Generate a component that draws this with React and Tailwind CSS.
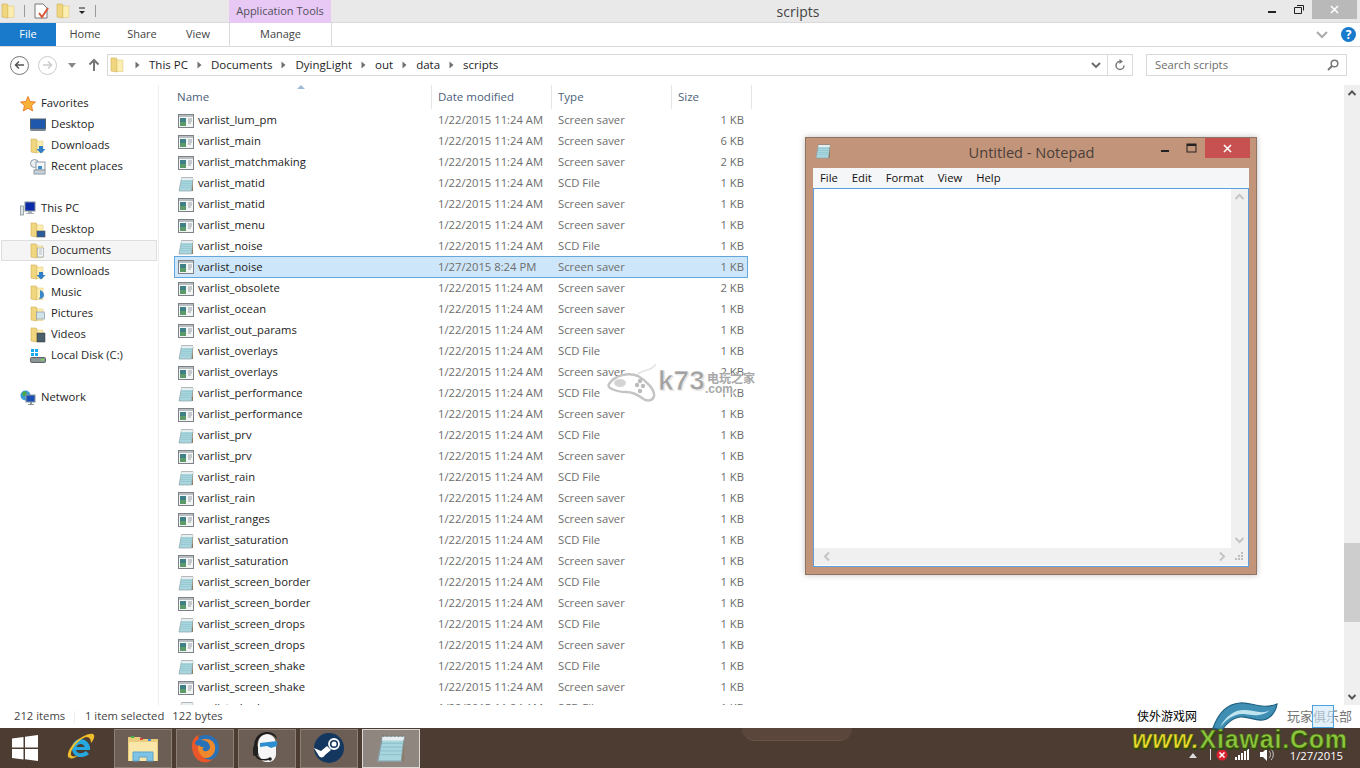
const FONT = '"Open Sans", "Noto Sans CJK SC", sans-serif';

const ROWS = [
  ['varlist_lum_pm', 'ss', 1], ['varlist_main', 'ss', 6], ['varlist_matchmaking', 'ss', 2],
  ['varlist_matid', 'scd', 1], ['varlist_matid', 'ss', 1], ['varlist_menu', 'ss', 1],
  ['varlist_noise', 'scd', 1], ['varlist_noise', 'ss', 1, true], ['varlist_obsolete', 'ss', 2],
  ['varlist_ocean', 'ss', 1], ['varlist_out_params', 'ss', 1], ['varlist_overlays', 'scd', 1],
  ['varlist_overlays', 'ss', 2], ['varlist_performance', 'scd', 1], ['varlist_performance', 'ss', 1],
  ['varlist_prv', 'scd', 1], ['varlist_prv', 'ss', 1], ['varlist_rain', 'scd', 1],
  ['varlist_rain', 'ss', 1], ['varlist_ranges', 'ss', 1], ['varlist_saturation', 'scd', 1],
  ['varlist_saturation', 'ss', 1], ['varlist_screen_border', 'scd', 1], ['varlist_screen_border', 'ss', 1],
  ['varlist_screen_drops', 'scd', 1], ['varlist_screen_drops', 'ss', 1], ['varlist_screen_shake', 'scd', 1],
  ['varlist_screen_shake', 'ss', 1], ['varlist_shader', 'scd', 1],
];

const SaverIcon = () => (
  <svg width="16" height="14" viewBox="0 0 16 14" className="shrink-0">
    <rect x="0.5" y="0.5" width="15" height="13" fill="#f4f5f5" stroke="#7c8287" />
    <rect x="1" y="1" width="14" height="2" fill="#b9bec2" />
    <rect x="2" y="4" width="6" height="8" fill="#3f7f86" />
    <rect x="2" y="8" width="6" height="4" fill="#5c9a6a" />
    <path d="M10 5h4M10 7h4M10 9h3" stroke="#9aa0a5" />
  </svg>
);

const NotepadIcon = ({ size = 16 }) => (
  <svg width={size} height={size} viewBox="0 0 16 16" className="shrink-0">
    <path d="M3.500 2h11.500l-1.500 13H1z" fill="#a9d6de" stroke="#8aa0a8" strokeWidth="0.7" />
    <path d="M3.500 2h11.500l-.3 2H3.200z" fill="#e6eef0" />
    <path d="M3.200 5.500h10.900M2.900 7.500h10.900M2.700 9.500h10.900M2.400 11.500h10.900" stroke="#8fc4cf" strokeWidth="0.7" />
    <path d="M13.700 15l1.300-12v12z" fill="#8b7b60" />
    <path d="M4 2v-1M6 2v-1M8 2v-1M10 2v-1M12 2v-1M14 2v-1" stroke="#777" strokeWidth="0.7" />
  </svg>
);

const Folder = ({ overlay }) => (
  <svg width="16" height="16" viewBox="0 0 16 16" className="shrink-0">
    <path d="M1 1h5l1 1v13l-6-1z" fill="#f0d67e" stroke="#cfae55" strokeWidth="0.6" />
    <path d="M7 3h6v11.500H7z" fill="#fbeeb0" stroke="#dcc376" strokeWidth="0.5" />
    {overlay === 'down' && <path d="M9 8h4v3h2.500L11 15.500 6.500 11H9z" fill="#2f7fc8" />}
    {overlay === 'desktop' && <rect x="7" y="9" width="8" height="6" fill="#2b5c9c" stroke="#555" strokeWidth="0.6" />}
    {overlay === 'docs' && <path d="M7.500 5h6v9h-6zM9 7h3M9 9h3M9 11h3" fill="#f4f4f4" stroke="#8c9aa6" strokeWidth="0.6" />}
    {overlay === 'music' && <path d="M10 5c3 1 4 3 4 5 0 3-3 4-5 4l1-2z" fill="#3b88c9" />}
    {overlay === 'pics' && <rect x="6.500" y="6" width="8" height="7" fill="#cfe3e8" stroke="#8c9aa6" strokeWidth="0.7" />}
    {overlay === 'video' && <path d="M7 6h8v9H7z" fill="#49606c" stroke="#333" strokeWidth="0.5" />}
  </svg>
);

const Star = () => (
  <svg width="16" height="16" viewBox="0 0 16 16" className="shrink-0">
    <path d="M8 .5l2.200 5 5.300.5-4 3.600 1.200 5.400L8 12.200 3.300 15l1.200-5.400-4-3.600 5.300-.5z" fill="#f9b233" stroke="#e8792b" strokeWidth="0.9" />
  </svg>
);

const Monitor = () => (
  <svg width="16" height="16" viewBox="0 0 16 16" className="shrink-0">
    <rect x="0.5" y="2" width="15" height="10" fill="#1f57ad" stroke="#54606a" />
    <rect x="0.5" y="12" width="15" height="2" fill="#7b8791" />
  </svg>
);

const Recent = () => (
  <svg width="16" height="16" viewBox="0 0 16 16" className="shrink-0">
    <circle cx="4.500" cy="4.500" r="4" fill="#e9eef1" stroke="#8e9aa3" />
    <rect x="6" y="3" width="9" height="8" fill="#f6f7f8" stroke="#8e9aa3" />
    <rect x="4" y="11" width="11" height="4" fill="#c9d2d8" stroke="#8e9aa3" />
    <rect x="8" y="7" width="4" height="3" fill="#3a8bc9" />
  </svg>
);

const ThisPC = () => (
  <svg width="16" height="16" viewBox="0 0 16 16" className="shrink-0">
    <rect x="0.5" y="5" width="3" height="9" fill="#dde3e6" stroke="#7c878e" strokeWidth="0.7" />
    <rect x="5" y="1" width="10" height="9" fill="#0c2ba8" stroke="#86929a" />
    <path d="M8 10h4v2h2v1H6v-1h2z" fill="#a8b2b8" />
  </svg>
);

const Disk = () => (
  <svg width="16" height="16" viewBox="0 0 16 16" className="shrink-0">
    <path d="M1 1h3v3H1zM5 1h3v3H5zM1 5h3v3H1zM5 5h3v3H5z" fill="#14a9f2" />
    <rect x="0.5" y="9.500" width="15" height="5" rx="1" fill="#8d9498" stroke="#5e6468" />
    <rect x="11" y="11" width="3" height="1.500" fill="#6fe04f" />
  </svg>
);

const Globe = () => (
  <svg width="16" height="16" viewBox="0 0 16 16" className="shrink-0">
    <circle cx="5.500" cy="5.500" r="5" fill="#3a9bd8" />
    <path d="M2 3l3-2 2 2-2 3H3zM6 7l3 1-1 2H6z" fill="#4aa845" />
    <rect x="6" y="5" width="9" height="7" fill="#1c4fb3" stroke="#8a959c" />
    <path d="M10 12h2v2h2v1H8v-1h2z" fill="#8a959c" />
  </svg>
);

const NavRow = ({ icon, label, child, active }) => (
  <div className={`h-[21px] flex items-center gap-[5px] text-[11.25px] text-[#1e1e1e] border ${child ? 'pl-[28px]' : 'pl-[18px]'} ${active ? 'bg-[#f5f5f5] border-[#dedede]' : 'border-transparent'}`}>
    {icon}
    <span>{label}</span>
  </div>
);

const Sidebar = () => (
  <div className="w-[159px] shrink-0 border-r border-[#eeeeee] pt-[8px] pl-px pr-px flex flex-col gap-[21px]">
    <div>
      <NavRow icon={<Star />} label="Favorites" />
      <NavRow child icon={<Monitor />} label="Desktop" />
      <NavRow child icon={<Folder overlay="down" />} label="Downloads" />
      <NavRow child icon={<Recent />} label="Recent places" />
    </div>
    <div>
      <NavRow icon={<ThisPC />} label="This PC" />
      <NavRow child icon={<Folder overlay="desktop" />} label="Desktop" />
      <NavRow child active icon={<Folder overlay="docs" />} label="Documents" />
      <NavRow child icon={<Folder overlay="down" />} label="Downloads" />
      <NavRow child icon={<Folder overlay="music" />} label="Music" />
      <NavRow child icon={<Folder overlay="pics" />} label="Pictures" />
      <NavRow child icon={<Folder overlay="video" />} label="Videos" />
      <NavRow child icon={<Disk />} label="Local Disk (C:)" />
    </div>
    <div>
      <NavRow icon={<Globe />} label="Network" />
    </div>
  </div>
);

const HeaderCell = ({ label, width }) => (
  <div className={`${width} h-[24px] pl-[6px] flex items-center border-r border-[#e5e5e5] text-[11.5px] text-[#4c607a]`}>{label}</div>
);

const FileRow = ({ name, kind, size, selected }) => (
  <div className={`w-[574px] flex items-center text-[11.25px] border ${selected ? 'h-[22px] -mt-px bg-[#cde6f9] border-[#64a7dc]' : 'h-[21px] border-transparent'}`}>
    <div className="w-[263px] pl-[3px] flex items-center gap-[4px] text-[#1c1c1c]">
      {kind === 'ss' ? <SaverIcon /> : <NotepadIcon />}
      <span>{name}</span>
    </div>
    <div className="w-[120px] text-[#6d6d6d]">{selected ? '1/27/2015 8:24 PM' : '1/22/2015 11:24 AM'}</div>
    <div className="w-[130px] text-[#6d6d6d]">{kind === 'ss' ? 'Screen saver' : 'SCD File'}</div>
    <div className="w-[56px] text-right text-[#6d6d6d]">{size} KB</div>
  </div>
);

const Scrollbar = () => (
  <div className="w-[16px] shrink-0 bg-[#efefef] flex flex-col items-center">
    <svg width="16" height="17" viewBox="0 0 16 17"><path d="M4.500 10l3.500-3.500 3.500 3.500" fill="none" stroke="#555" strokeWidth="2" /></svg>
    <div className="h-[441px]" />
    <div className="w-full h-[79px] bg-[#cdcdcd]" />
    <div className="flex-1" />
    <svg width="16" height="17" viewBox="0 0 16 17"><path d="M4.500 7l3.500 3.500 3.500-3.500" fill="none" stroke="#555" strokeWidth="2" /></svg>
  </div>
);

const Crumb = ({ label }) => (
  <>
    <svg width="5" height="8" viewBox="0 0 5 8" className="shrink-0"><path d="M0.5 0.500l4 3.500-4 3.500z" fill="#707070" /></svg>
    <span>{label}</span>
  </>
);

const Notepad = () => (
  <div className="absolute left-[805px] top-[137px] w-[452px] h-[438px] bg-[#c29479] border border-[#8f7464] shadow-[0_0_6px_rgba(0,0,0,0.25)] flex flex-col px-[7px] pb-[7px]">
    <div className="h-[30px] shrink-0 relative flex items-center justify-center text-[14.6px] text-[#4a3f3a]">
      <div className="absolute left-[2px] top-[5px]"><NotepadIcon /></div>
      <span className="ml-[1px] -mt-[1px]">Untitled - Notepad</span>
      <svg className="absolute left-[348px] top-[11px]" width="10" height="4" viewBox="0 0 10 4"><rect y="1" width="8" height="2" fill="#222" /></svg>
      <svg className="absolute left-[373px] top-[5px]" width="12" height="10" viewBox="0 0 12 10"><rect x="1" y="1" width="9" height="8" fill="none" stroke="#222" /><rect x="1" y="1" width="9" height="2" fill="#222" /></svg>
      <div className="absolute left-[392px] top-0 w-[45px] h-[20px] bg-[#c75050] flex items-center justify-center">
        <svg width="9" height="9" viewBox="0 0 9 9"><path d="M1 1l7 7M8 1l-7 7" stroke="#fff" strokeWidth="1.600" /></svg>
      </div>
    </div>
    <div className="h-[20px] shrink-0 bg-[#f5f6f7] flex items-center gap-[14px] pl-[7px] text-[11.25px] text-[#111]">
      <span>File</span><span>Edit</span><span>Format</span><span>View</span><span>Help</span>
    </div>
    <div className="flex-1 min-h-0 bg-white border border-[#5a9fe2] flex flex-col">
      <div className="flex-1 flex justify-end">
        <div className="w-[17px] bg-[#f0f0f0] flex flex-col justify-between">
          <svg width="17" height="17" viewBox="0 0 17 17"><path d="M4.500 10l4-4 4 4" fill="none" stroke="#c4c4c4" strokeWidth="2" /></svg>
          <svg width="17" height="17" viewBox="0 0 17 17"><path d="M4.500 7l4 4 4-4" fill="none" stroke="#c4c4c4" strokeWidth="2" /></svg>
        </div>
      </div>
      <div className="h-[17px] bg-[#f0f0f0] flex items-center justify-between pl-[5px] pr-[4px] mb-px">
        <svg width="17" height="17" viewBox="0 0 17 17"><path d="M10 4.500l-4 4 4 4" fill="none" stroke="#c4c4c4" strokeWidth="2" /></svg>
        <div className="flex items-center gap-[5px]">
          <svg width="17" height="17" viewBox="0 0 17 17"><path d="M7 4.500l4 4-4 4" fill="none" stroke="#c4c4c4" strokeWidth="2" /></svg>
          <svg width="9" height="9" viewBox="0 0 9 9"><path d="M6 0h2v2H6zM3 3h2v2H3zM6 3h2v2H6zM0 6h2v2H0zM3 6h2v2H3zM6 6h2v2H6z" fill="#bdbdbd" /></svg>
        </div>
      </div>
    </div>
  </div>
);

const TaskBtn = ({ active, children }) => (
  <div className={`w-[58px] h-[39px] flex items-center justify-center border ${active ? 'bg-[#8f867f] border-[#dcd8d5]' : 'bg-[#6c5e54] border-[#8c7f76]'}`}>{children}</div>
);

const Taskbar = () => (
  <div className="h-[40px] shrink-0 bg-[#4c3c32] flex items-center pl-[4px] relative">
    {/* wallpaper showing through the glass */}
    <div className="absolute left-[742px] top-0 w-[110px] h-[13px] bg-[#5a463a] rounded-b-[40px] border-b border-[#6a5346]" />
    <div className="w-[42px] flex justify-center">
      <svg width="27" height="26" viewBox="0 0 27 26"><path d="M0 3.500L11.500 2v10.500H0zM13 1.800L26 0v12.500H13zM0 14h11.500v10.500L0 23zM13 14h13v12l-13-1.800z" fill="#fff" /></svg>
    </div>
    <div className="w-[68px] flex justify-center relative">
      <svg width="32" height="32" viewBox="0 0 32 32">
        <path d="M16 7a10 10 0 0 1 10 11H12c.4 3 5 5 10 1l3 3c-7 6-17 3-17-6 0-5 4-9 8-9zm-3.500 8h8c-.5-4-7-4-8 0z" fill="#25a8e0" />
        <path d="M5 26C1 22 9 9 20 4c5-2.500 9-3 10-1 1 2-1 6-3 8 0-3-1-6-5-6C13 8 4 21 8 24c2 1 5 0 7-1-4 3-8 5-10 2z" fill="#f0bd2d" />
      </svg>
    </div>
    <div className="flex gap-[4px] relative">
      <TaskBtn>
        <svg width="32" height="30" viewBox="0 0 32 30">
          <path d="M1 4h12l2 2h16v22H1z" fill="#e9cc7c" />
          <path d="M2 9h28v19H2z" fill="#f8e7a8" />
          <rect x="4" y="3" width="3" height="2" fill="#3fb24a" /><rect x="13" y="5" width="3" height="2" fill="#d8483c" /><rect x="21" y="6" width="3" height="2" fill="#3a8fd8" />
          <path d="M6 28v-9h20v9h-6v-4h-8v4z" fill="#7fc4e6" stroke="#5fa3c9" />
        </svg>
      </TaskBtn>
      <TaskBtn>
        <svg width="32" height="32" viewBox="0 0 32 32">
          <circle cx="17" cy="16" r="13" fill="#2a72b8" />
          <path d="M17 7c5 0 8 3 9 7 1 6-3 12-9 12-5 0-9-3-9-9 0-2 1-3 2-4 1 2 3 2 5 2-2 1-2 3 0 4 3 1 6-1 6-4 0-4-4-7-9-7 1-1 3-1 5-1z" fill="#f0892c" />
          <path d="M3 16C2 9 6 4 10 3c-1 1-1 3 0 4-3 1-4 3-4 5l3 2c-1 4 2 10 8 13 3 1 5 1 7 0-3 3-7 4-11 3C7 28 4 23 3 16z" fill="#e8562a" />
        </svg>
      </TaskBtn>
      <TaskBtn>
        <svg width="32" height="34" viewBox="0 0 32 34">
          <path d="M7 14C7 7 11 3 16 3s9 4 9 11v9c0 4-3 8-7 8h-3c-4 0-7-5-8-10z" fill="#f6f6f6" />
          <path d="M3 16C3 6 9 1 16 1c5 0 9 2 10 7-3-4-6-5-10-5C10 3 6 8 6 16z" fill="#1d1d1d" />
          <rect x="2" y="15" width="5" height="10" rx="2" fill="#222" />
          <path d="M9 12l17-2v5l-6 2-4-2-7 1z" fill="#2d8fd0" />
          <path d="M5 25c2 3 7 5 13 3" fill="none" stroke="#1d1d1d" strokeWidth="1.500" />
          <circle cx="19" cy="28" r="1.800" fill="#1d1d1d" />
        </svg>
      </TaskBtn>
      <TaskBtn>
        <svg width="30" height="30" viewBox="0 0 30 30">
          <circle cx="15" cy="15" r="15" fill="#14375f" />
          <circle cx="20" cy="11" r="5" fill="none" stroke="#fff" strokeWidth="1.800" />
          <circle cx="20" cy="11" r="2.500" fill="#fff" />
          <path d="M0 15l7 3 6-5 4 4-6 5c-1 3-5 3-6 1z" fill="#fff" />
        </svg>
      </TaskBtn>
      <TaskBtn active><NotepadIcon size={30} /></TaskBtn>
    </div>
    <div className="flex-1" />
    <div className="flex flex-col items-end pr-[17px] text-white text-[11.25px] pt-[17px]">
      <span>1/27/2015</span>
    </div>
    <div className="absolute left-[1189px] top-[20px] flex items-center">
      <svg width="8" height="6" viewBox="0 0 8 6"><path d="M0 6l4-5 4 5z" fill="#ddd" /></svg>
      <div className="w-px h-[11px] bg-[#ddd] ml-[13px]" />
      <svg width="12" height="12" viewBox="0 0 12 12" className="ml-[5px]"><circle cx="6" cy="6" r="5.500" fill="#d9232e" /><path d="M3.500 3.500l5 5M8.500 3.500l-5 5" stroke="#fff" strokeWidth="1.500" /></svg>
      <svg width="16" height="11" viewBox="0 0 16 11" className="ml-[7px]"><path d="M0 8h2v3H0zM3 6h2v5H3zM6 4h2v7H6zM9 2h2v9H9zM12 0h2v11h-2z" fill="#fff" /></svg>
      <svg width="15" height="13" viewBox="0 0 15 13" className="ml-[9px]"><path d="M0 4h3l4-4v13l-4-4H0z" fill="#fff" /><path d="M9 3c2 2 2 5 0 7M11 1c3 3 3 8 0 11" fill="none" stroke="#ccc" /></svg>
    </div>
  </div>
);

const Watermarks = () => (
  <>
    <div className="absolute left-[607px] top-[363px] flex items-start pointer-events-none">
      <svg width="50" height="40" viewBox="0 0 50 40">
        <path d="M49 1C44 9 36 6 31 11" fill="none" stroke="#e4e4e4" strokeWidth="1.500" />
        <path d="M2 21C8 12 22 9 31 13c9 5 17 14 16 20-1 5-7 6-12 2-4-3-10-6-16-6-5 0-10-1-14-3-3-1-4-3-3-5z" fill="#fff" stroke="#c4c4c4" strokeWidth="2.500" />
        <ellipse cx="13" cy="20" rx="6" ry="4" fill="#d4d4d4" />
        <circle cx="30" cy="22" r="2.200" fill="#bbb" /><circle cx="36" cy="23" r="2.200" fill="#bbb" /><circle cx="33" cy="18" r="2.200" fill="#bbb" /><circle cx="33" cy="28" r="2.200" fill="#bbb" />
      </svg>
      <div className="relative w-[100px] h-[40px] ml-px">
        <span className="absolute left-0 top-[2px] text-[28px] leading-[32px] font-bold text-[#a2a2a2] [-webkit-text-stroke:0.5px_#fff] [text-shadow:1px_1px_1px_#ddd]" style={{ fontFamily: '"Liberation Sans", sans-serif' }}>k73</span>
        <span className="absolute left-[49px] top-[8px] text-[12px] leading-[14px] font-bold text-[#a8a8a8] [text-shadow:1px_1px_0_#fff]" style={{ fontFamily: '"Noto Sans CJK SC", sans-serif' }}>电玩之家</span>
        <span className="absolute left-[47px] top-[19px] text-[12px] leading-[14px] font-bold text-[#a8a8a8] [text-shadow:1px_1px_0_#fff]" style={{ fontFamily: '"Liberation Sans", sans-serif' }}>.com</span>
      </div>
    </div>

    <span className="absolute left-[1137px] top-[707px] text-[12px] leading-[18px] text-black" style={{ fontFamily: '"Noto Sans CJK SC", sans-serif' }}>侠外游戏网</span>
    <span className="absolute left-[1287px] top-[707px] text-[13px] leading-[18px] text-[#777]" style={{ fontFamily: '"Noto Sans CJK SC", sans-serif' }}>玩家俱乐部</span>
    <div className="absolute left-[1312px] top-[705px] w-[22px] h-[23px] bg-[#cfe8f8]/60 border border-[#49a4df]" />
    <svg className="absolute left-[1210px] top-[702px]" width="70" height="30" viewBox="0 0 70 30">
      <path d="M3 26C8 12 16 2 30 1c12-1 22 7 37 1-1 8-7 15-14 16-9 1-15-4-23-3-8 1-14 7-18 13z" fill="#3f8fb5" stroke="#1d5f80" strokeWidth="1.200" />
      <path d="M10 25c6-11 14-17 24-17 10 0 18 5 26 0-6 6-16 6-26 4-10-1-18 6-24 13z" fill="#bfe3ef" />
    </svg>
    <div className="absolute left-[1132px] top-[728px] text-[25px] leading-[22px] font-bold tracking-[0.8px] [-webkit-text-stroke:0.6px_#3d5a0c] [text-shadow:1px_2px_0_#2e4a08] whitespace-nowrap" style={{ fontFamily: '"Liberation Sans", sans-serif' }}>
      <span className="italic text-[#ecd92e]">www.</span><span className="text-[#8cc63e]">Xiawai.Com</span>
    </div>
  </>
);

export default function App() {
  return (
    <div className="relative w-[1360px] h-[768px] overflow-hidden bg-white flex flex-col" style={{ fontFamily: FONT }}>
      {/* title bar */}
      <div className="h-[23px] shrink-0 bg-[#e9e9e9] border-b border-[#dadada] flex relative">
        <div className="flex items-center w-[229px] pl-px gap-[7px]">
          <Folder />
          <div className="w-px h-[12px] bg-[#999]" />
          <svg width="16" height="16" viewBox="0 0 16 16" className="ml-[2px] shrink-0"><path d="M1 1h8l4 4v10H1z" fill="#fff" stroke="#777" /><path d="M5 10l3 4 6-9" fill="none" stroke="#d9593a" strokeWidth="2" /></svg>
          <div className="-ml-px"><Folder /></div>
          <svg width="8" height="8" viewBox="0 0 8 8" className="-ml-px"><path d="M1 1h6" stroke="#222" /><path d="M1 4h6L4 7z" fill="#222" /></svg>
          <div className="w-px h-[12px] bg-[#999] ml-[2px]" />
        </div>
        <div className="w-[102px] h-[23px] bg-[#e8c9f6] flex items-center justify-center text-[11px] text-[#50505a]">Application Tools</div>
        <div className="absolute left-0 right-0 top-px text-center text-[14px] text-[#444] pl-[236px] pointer-events-none">scripts</div>
        <div className="flex-1" />
        <div className="flex items-start">
          <svg width="10" height="19" viewBox="0 0 10 19"><rect x="0" y="11" width="8" height="2" fill="#222" /></svg>
          <svg width="14" height="19" viewBox="0 0 14 19" className="ml-[15px]"><path d="M1.500 7.500h7v6h-7zM4 5.500h6.500v5" fill="none" stroke="#222" /></svg>
          <div className="ml-[5px] w-[45px] h-[19px] bg-[#b9b9b9] flex items-center justify-center">
            <svg width="9" height="9" viewBox="0 0 9 9"><path d="M1 1l7 7M8 1l-7 7" stroke="#fff" strokeWidth="1.600" /></svg>
          </div>
          <div className="w-[3px]" />
        </div>
      </div>

      {/* ribbon tabs */}
      <div className="h-[24px] shrink-0 bg-white border-b border-[#dadada] flex items-center text-[11px] text-[#444]">
        <div className="w-[56px] h-full bg-[#1979ca] flex items-center justify-center text-white">File</div>
        <div className="w-[58px] text-center">Home</div>
        <div className="w-[56px] text-center">Share</div>
        <div className="w-[56px] text-center">View</div>
        <div className="w-[103px] h-full ml-[3px] border-x border-[#dadada] flex items-center justify-center">Manage</div>
        <div className="flex-1" />
        <svg width="14" height="14" viewBox="0 0 14 14" className="mr-[12px]"><path d="M2 4l5 5 5-5" fill="none" stroke="#aaa" strokeWidth="2" /></svg>
        <div className="w-[15px] h-[15px] rounded-full bg-[#1979ca] text-white font-bold text-[12px] leading-[15px] text-center mr-[4px]">?</div>
      </div>

      {/* address row */}
      <div className="h-[38px] shrink-0 flex items-center pl-[10px] pr-[13px] pb-[2px]">
        <div className="w-[19px] h-[19px] rounded-full border border-[#777] flex items-center justify-center">
          <svg width="11" height="10" viewBox="0 0 11 10"><path d="M10 5H2M5 1.500L1.500 5 5 8.500" fill="none" stroke="#555" strokeWidth="1.500" /></svg>
        </div>
        <div className="w-[19px] h-[19px] ml-[9px] rounded-full border border-[#ccc] flex items-center justify-center">
          <svg width="11" height="10" viewBox="0 0 11 10"><path d="M1 5h8M6 1.500L9.500 5 6 8.500" fill="none" stroke="#ccc" strokeWidth="1.500" /></svg>
        </div>
        <svg width="8" height="5" viewBox="0 0 8 5" className="ml-[11px]"><path d="M0 0h8L4 5z" fill="#888" /></svg>
        <svg width="12" height="14" viewBox="0 0 12 14" className="ml-[12px]"><path d="M6 13V2M1.500 6.500L6 2l4.500 4.500" fill="none" stroke="#777" strokeWidth="2" /></svg>
        <div className="w-[1026px] h-[22px] ml-[7px] border border-[#d9d9d9] flex items-center text-[11.5px] text-[#1e1e1e]">
          <div className="ml-[2px] mr-[9px]"><Folder /></div>
          <div className="flex items-center gap-[9px]">
            <Crumb label="This PC" /><Crumb label="Documents" /><Crumb label="DyingLight" /><Crumb label="out" /><Crumb label="data" /><Crumb label="scripts" />
          </div>
          <div className="flex-1" />
          <svg width="10" height="7" viewBox="0 0 10 7" className="mr-[6px]"><path d="M1 1l4 4 4-4" fill="none" stroke="#666" strokeWidth="1.800" /></svg>
          <div className="w-[25px] h-full border-l border-[#d9d9d9] flex items-center justify-center">
            <svg width="12" height="12" viewBox="0 0 12 12"><path d="M10 6.500A4 4 0 1 1 6 2.500" fill="none" stroke="#777" strokeWidth="1.500" /><path d="M5.500 0l3.500 2.500L5.500 5z" fill="#777" /></svg>
          </div>
        </div>
        <div className="flex-1" />
        <div className="w-[201px] h-[22px] border border-[#d9d9d9] flex items-center justify-between pl-[8px] pr-[7px] text-[11.25px] text-[#6d6d6d]">
          <span>Search scripts</span>
          <svg width="12" height="12" viewBox="0 0 12 12"><circle cx="7.500" cy="4.500" r="3.300" fill="none" stroke="#777" strokeWidth="1.500" /><path d="M5 7l-4 4" stroke="#777" strokeWidth="2" /></svg>
        </div>
      </div>

      {/* main */}
      <div className="flex-1 min-h-0 flex">
        <Sidebar />
        <div className="flex-1 min-w-0 overflow-hidden relative">
          <svg className="absolute left-[138px] top-0" width="8" height="4" viewBox="0 0 8 4"><path d="M0 4l4-4 4 4z" fill="#9dbbd6" /></svg>
          <div className="flex pl-[12px]">
            <HeaderCell label="Name" width="w-[261px]" />
            <HeaderCell label="Date modified" width="w-[120px]" />
            <HeaderCell label="Type" width="w-[120px]" />
            <HeaderCell label="Size" width="w-[80px]" />
          </div>
          <div className="pl-[15px] pt-px">
            {ROWS.map(([name, kind, size, selected], i) => (
              <FileRow key={i} name={name} kind={kind} size={size} selected={selected} />
            ))}
          </div>
        </div>
        <Scrollbar />
      </div>

      {/* status bar */}
      <div className="h-[23px] shrink-0 bg-white flex items-center pl-[14px] text-[11.25px] text-[#444]">
        <span className="w-[60px]">212 items</span>
        <div className="w-px h-[12px] bg-[#eeeeee] mr-[10px]" />
        <span className="mr-[8px]">1 item selected</span>
        <span>122 bytes</span>
      </div>

      <Taskbar />
      <Notepad />
      <Watermarks />
    </div>
  );
}
